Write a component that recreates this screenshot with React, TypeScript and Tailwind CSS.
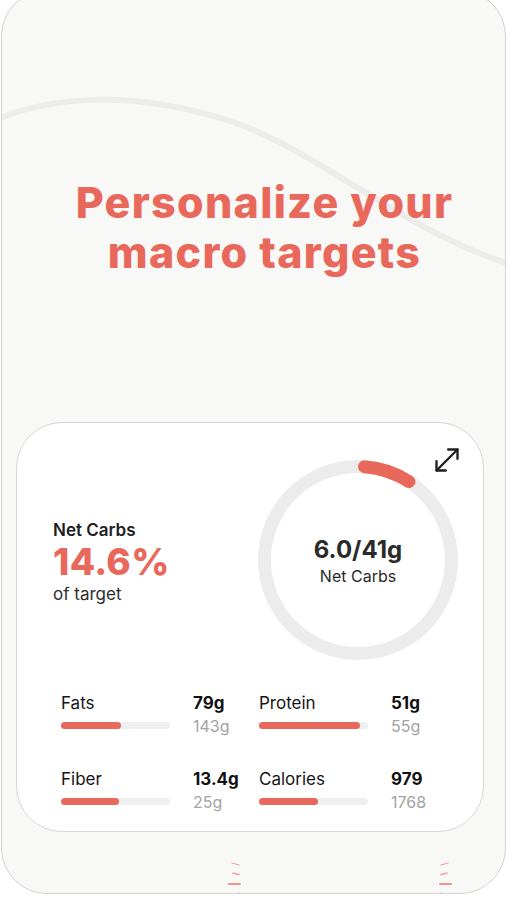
import React from 'react';

const coral = '#e8695c';

type Macro = { label: string; value: string; target: string; pct: number };

const macros: Macro[] = [
  { label: 'Fats', value: '79g', target: '143g', pct: 55 },
  { label: 'Protein', value: '51g', target: '55g', pct: 93 },
  { label: 'Fiber', value: '13.4g', target: '25g', pct: 53 },
  { label: 'Calories', value: '979', target: '1768', pct: 54 },
];

// point on the ring, angle in degrees clockwise from top
function polar(cx: number, cy: number, r: number, deg: number) {
  const a = (deg * Math.PI) / 180;
  return [cx + r * Math.sin(a), cy - r * Math.cos(a)];
}

function Ring() {
  const c = 100;
  const r = 93.5;
  const [x1, y1] = polar(c, c, r, 4);
  const [x2, y2] = polar(c, c, r, 33);
  return (
    <div className="relative w-[200px] h-[200px] shrink-0">
      <svg width="200" height="200" viewBox="0 0 200 200" className="absolute inset-0">
        <circle cx={c} cy={c} r={r} fill="none" stroke="#ececec" strokeWidth="13" />
        <path
          d={`M ${x1} ${y1} A ${r} ${r} 0 0 1 ${x2} ${y2}`}
          fill="none"
          stroke={coral}
          strokeWidth="13"
          strokeLinecap="round"
        />
      </svg>
      <div className="relative flex h-full flex-col items-center justify-center pt-[2px]">
        <div className="text-[24px] leading-[30px] font-bold text-[#2a2a2a]">6.0/41g</div>
        <div className="text-[16px] leading-[22px] text-[#2a2a2a]">Net Carbs</div>
      </div>
    </div>
  );
}

function MacroCell({ m }: { m: Macro }) {
  return (
    <div className="flex">
      <div className="w-[109px]">
        <div className="text-[17px] leading-[22px] text-[#151515]">{m.label}</div>
        <div className="mt-[8px] h-[7px] w-full rounded-full bg-[#efefef]">
          <div className="h-full rounded-full bg-[#e8695c]" style={{ width: `${m.pct}%` }} />
        </div>
      </div>
      <div className="ml-[23px]">
        <div className="text-[17px] leading-[22px] font-bold text-[#111]">{m.value}</div>
        <div className="mt-[1px] text-[16px] leading-[22px] text-[#a3a3a3]">{m.target}</div>
      </div>
    </div>
  );
}

function Ticks({ flip }: { flip?: boolean }) {
  return (
    <svg width="16" height="40" viewBox="0 0 16 40" className={flip ? '-scale-x-100' : ''}>
      <g strokeLinecap="round">
        <line x1="4" y1="3" x2="11" y2="5" strokeWidth="1.3" stroke="#efa39a" />
        <line x1="5" y1="13" x2="11" y2="14.5" strokeWidth="1.3" stroke="#efa39a" />
        <line x1="1" y1="24" x2="12" y2="24" strokeWidth="2" stroke="#ec978c" />
        <line x1="4" y1="35" x2="11" y2="33" strokeWidth="1.3" stroke="#efa39a" />
      </g>
    </svg>
  );
}

export default function App() {
  return (
    <div
      className="w-[507px] h-[900px] overflow-hidden bg-white"
      style={{ fontFamily: 'Inter, "Noto Sans", sans-serif' }}
    >
      <div className="relative ml-[1px] -mt-[10px] h-[904px] w-[505px] overflow-hidden rounded-[46px] border border-[#d2d2d2] bg-[#f8f8f6]">
        {/* background wave */}
        <svg
          width="507"
          height="300"
          viewBox="0 0 507 300"
          className="absolute left-[-2px] top-[9px]"
        >
          <path
            d="M -5 120 C 50 97, 130 89, 230 121 C 320 151, 400 230, 515 266"
            fill="none"
            stroke="#ececea"
            strokeWidth="6"
          />
        </svg>

        <div className="relative">
          <h1 className="pt-[186px] pl-[22px] text-center text-[43px] leading-[50px] font-extrabold tracking-[1.3px] text-[#e8695c]">
            Personalize your
            <br />
            macro targets
          </h1>

          <div className="relative ml-[14px] mt-[145px] h-[410px] w-[468px] rounded-[46px] border border-[#d6d6d6] bg-white pt-[37px]">
            <svg
              width="28"
              height="28"
              viewBox="0 0 24 24"
              fill="none"
              stroke="#1f1f1f"
              strokeWidth="2"
              strokeLinecap="round"
              strokeLinejoin="round"
              className="absolute right-[22px] top-[23px]"
            >
              <path d="M3 13v8h8" />
              <path d="M13 3h8v8" />
              <path d="M21 3 3 21" />
            </svg>

            <div className="flex items-center">
              <div className="w-[205px] pl-[36px] pt-[4px]">
                <div className="text-[17px] leading-[22px] font-semibold text-[#1e1e1e]">Net Carbs</div>
                <div className="text-[37px] leading-[42px] font-extrabold tracking-[0.3px] text-[#e8695c]">14.6%</div>
                <div className="text-[17px] leading-[22px] text-[#2e2e2e]">of target</div>
              </div>
              <div className="ml-[36px]">
                <Ring />
              </div>
            </div>

            <div className="mt-[32px] grid grid-cols-[198px_198px] gap-y-[31px] pl-[44px]">
              {macros.map((m) => (
                <MacroCell key={m.label} m={m} />
              ))}
            </div>
          </div>

          <div className="mt-[28px] flex gap-[192px] pl-[226px]">
            <Ticks />
            <Ticks flip />
          </div>
        </div>
      </div>
    </div>
  );
}
